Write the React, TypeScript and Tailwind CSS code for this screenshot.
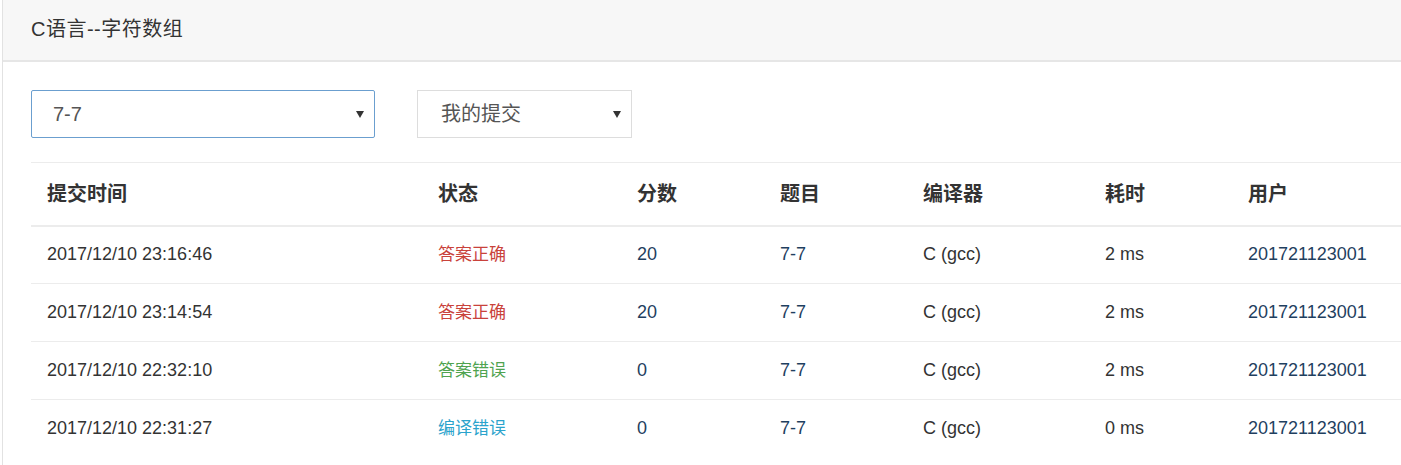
import React from "react";

const rows = [
  { time: "2017/12/10 23:16:46", status: "答案正确", color: "text-[#c9423b]", score: "20", t: "2 ms" },
  { time: "2017/12/10 23:14:54", status: "答案正确", color: "text-[#c9423b]", score: "20", t: "2 ms" },
  { time: "2017/12/10 22:32:10", status: "答案错误", color: "text-[#4fa34f]", score: "0", t: "2 ms" },
  { time: "2017/12/10 22:31:27", status: "编译错误", color: "text-[#2ba3cc]", score: "0", t: "0 ms" },
];

const font = { fontFamily: '"Liberation Sans", "Noto Sans CJK SC", sans-serif' };

function Arrow() {
  return (
    <svg width="8" height="7" viewBox="0 0 8 7" className="block">
      <path d="M0 0 H8 L4 7 Z" fill="#333" />
    </svg>
  );
}

export default function App() {
  return (
    <div className="w-[1401px] h-[465px] overflow-hidden bg-white text-[#333]" style={font}>
      <div className="ml-[2px] w-[1500px] h-[465px] border-l border-[#e2e2e2]">
        <div className="h-[62px] bg-[#f7f7f7] border-b-2 border-[#e6e6e6] flex items-center pl-[28px] pb-[2px]">
          <span className="text-[20px] tracking-[0.5px] text-[#333]">C语言--字符数组</span>
        </div>
        <div className="pl-[28px]">
          <div className="flex items-center gap-[42px] pt-[28px]">
            <div className="w-[344px] h-[48px] border border-[#6b9fcf] rounded-[2px] flex items-center justify-between pl-[21px] pr-[10px]">
              <span className="text-[20px] text-[#555]">7-7</span>
              <Arrow />
            </div>
            <div className="w-[215px] h-[48px] border border-[#dddddd] flex items-center justify-between pl-[23px] pr-[10px]">
              <span className="text-[20px] text-[#555]">我的提交</span>
              <Arrow />
            </div>
          </div>
          <table className="mt-[24px] table-fixed border-collapse w-[1450px]">
            <colgroup>
              <col className="w-[391px]" />
              <col className="w-[199px]" />
              <col className="w-[143px]" />
              <col className="w-[143px]" />
              <col className="w-[182px]" />
              <col className="w-[143px]" />
              <col />
            </colgroup>
            <thead>
              <tr className="h-[63px] border-t border-b-2 border-[#ececec]">
                {["提交时间", "状态", "分数", "题目", "编译器", "耗时", "用户"].map((h) => (
                  <th key={h} className="text-left font-bold text-[20px] pl-[16px] text-[#333]">
                    {h}
                  </th>
                ))}
              </tr>
            </thead>
            <tbody>
              {rows.map((r, i) => (
                <tr
                  key={i}
                  className={`h-[58px] text-[18px] ${i < rows.length - 1 ? "border-b border-[#ececec]" : ""}`}
                >
                  <td className="pl-[16px]">{r.time}</td>
                  <td className={`pl-[16px] text-[17px] ${r.color}`}>{r.status}</td>
                  <td className="pl-[16px] text-[#1f3f5f]">{r.score}</td>
                  <td className="pl-[16px] text-[#1f3f5f]">7-7</td>
                  <td className="pl-[16px]">C (gcc)</td>
                  <td className="pl-[16px]">{r.t}</td>
                  <td className="pl-[16px] text-[#1f3f5f]">201721123001</td>
                </tr>
              ))}
            </tbody>
          </table>
        </div>
      </div>
    </div>
  );
}
